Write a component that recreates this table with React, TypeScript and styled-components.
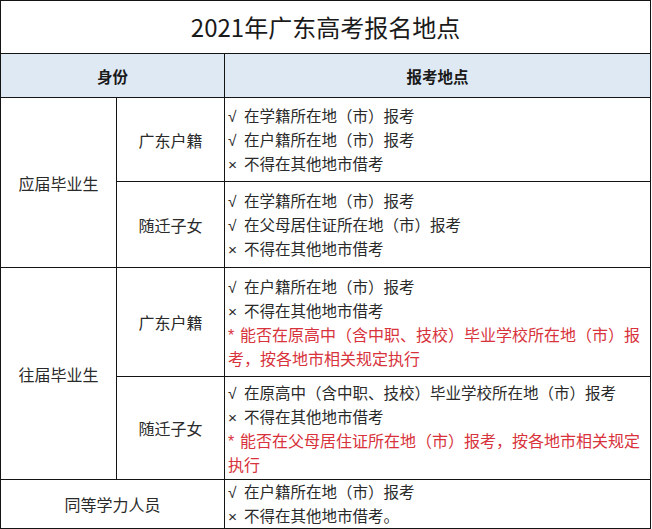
import React from "react";
import styled, { createGlobalStyle } from "styled-components";

const GlobalStyle = createGlobalStyle`
  html, body {
    margin: 0;
    padding: 0;
    background: #ffffff;
  }
  body {
    font-family: "Noto Sans CJK SC", "Noto Sans", sans-serif;
    color: #222222;
  }
`;

type Tone = "ok" | "no" | "note";
type Rule = { mark: Tone; text: string };

const rows: {
  group?: { label: string; span: number };
  sub?: string;
  height: number;
  rules: Rule[];
}[] = [
  {
    group: { label: "应届毕业生", span: 2 },
    sub: "广东户籍",
    height: 84,
    rules: [
      { mark: "ok", text: "在学籍所在地（市）报考" },
      { mark: "ok", text: "在户籍所在地（市）报考" },
      { mark: "no", text: "不得在其他地市借考" },
    ],
  },
  {
    sub: "随迁子女",
    height: 86,
    rules: [
      { mark: "ok", text: "在学籍所在地（市）报考" },
      { mark: "ok", text: "在父母居住证所在地（市）报考" },
      { mark: "no", text: "不得在其他地市借考" },
    ],
  },
  {
    group: { label: "往届毕业生", span: 2 },
    sub: "广东户籍",
    height: 109,
    rules: [
      { mark: "ok", text: "在户籍所在地（市）报考" },
      { mark: "no", text: "不得在其他地市借考" },
      {
        mark: "note",
        text: "能否在原高中（含中职、技校）毕业学校所在地（市）报考，按各地市相关规定执行",
      },
    ],
  },
  {
    sub: "随迁子女",
    height: 103,
    rules: [
      { mark: "ok", text: "在原高中（含中职、技校）毕业学校所在地（市）报考" },
      { mark: "no", text: "不得在其他地市借考" },
      {
        mark: "note",
        text: "能否在父母居住证所在地（市）报考，按各地市相关规定执行",
      },
    ],
  },
];

const marks: Record<Tone, string> = { ok: "√", no: "×", note: "*" };

function RuleItem({ mark, text }: Rule) {
  return (
    <RuleLine $tone={mark}>
      <Mark $tone={mark}>{marks[mark]}</Mark>
      {text}
    </RuleLine>
  );
}

export default function App() {
  return (
    <>
      <GlobalStyle />
      <Table>
        <colgroup>
          <col style={{ width: 116 }} />
          <col style={{ width: 108 }} />
          <col />
        </colgroup>
        <tbody>
          <tr>
            <TitleCell colSpan={3}>2021年广东高考报名地点</TitleCell>
          </tr>
          <tr>
            <HeadCell colSpan={2}>身份</HeadCell>
            <HeadCell>报考地点</HeadCell>
          </tr>
          {rows.map((row, i) => (
            <Row key={i} $h={row.height}>
              {row.group && (
                <LabelCell rowSpan={row.group.span}>{row.group.label}</LabelCell>
              )}
              <LabelCell>{row.sub}</LabelCell>
              <RulesCell>
                {row.rules.map((r, j) => (
                  <RuleItem key={j} {...r} />
                ))}
              </RulesCell>
            </Row>
          ))}
          <Row $h={49}>
            <LabelCell colSpan={2}>同等学力人员</LabelCell>
            <RulesCell>
              <RuleItem mark="ok" text="在户籍所在地（市）报考" />
              <RuleItem mark="no" text="不得在其他地市借考。" />
            </RulesCell>
          </Row>
        </tbody>
      </Table>
    </>
  );
}

const Table = styled.table`
  width: 651px;
  border-collapse: collapse;
  table-layout: fixed;

  td {
    border: 1px solid #141414;
    padding: 0;
  }
`;

const TitleCell = styled.td`
  height: 52px;
  text-align: center;
  font-size: 24px;
  line-height: 30px;
  color: #1a1a1a;
`;

const HeadCell = styled.td`
  height: 43px;
  background: #dfe9f4;
  text-align: center;
  font-size: 15.5px;
  font-weight: 700;
  color: #1a1a1a;
`;

const Row = styled.tr<{ $h: number }>`
  height: ${(p) => p.$h}px;
`;

const LabelCell = styled.td`
  text-align: center;
  vertical-align: middle;
  font-size: 16px;
  color: #2a2a2a;
`;

const RulesCell = styled.td`
  vertical-align: middle;
  && {
    padding: 0 2px 0 3px;
  }
`;

const RuleLine = styled.div<{ $tone: Tone }>`
  font-size: ${(p) => (p.$tone === "note" ? "16px" : "15.5px")};
  line-height: 23px;
  color: ${(p) => (p.$tone === "note" ? "#d8333c" : "#2a2a2a")};
`;

const Mark = styled.span<{ $tone: Tone }>`
  display: inline-block;
  width: ${(p) => (p.$tone === "note" ? "12px" : "16px")};
  font-family: "Liberation Sans", "DejaVu Sans", sans-serif;
`;
